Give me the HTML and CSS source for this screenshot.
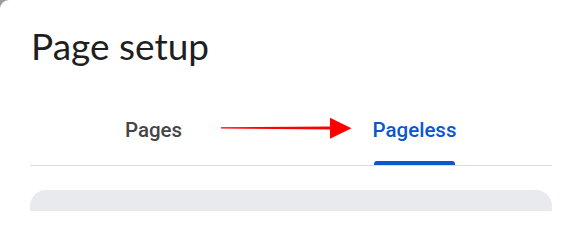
FILE: index.html
```html
<!DOCTYPE html>
<html lang="en">
<head>
<meta charset="utf-8">
<title>Page setup</title>
<link rel="stylesheet" href="styles.css">
</head>
<body>
<div class="dialog">
  <h1 class="title">Page setup</h1>
  <div class="tabbar">
    <div class="tabs">
      <div class="tab"><span class="tab-label">Pages</span></div>
      <div class="tab tab-active"><span class="tab-label">Pageless</span></div>
    </div>
  </div>
  <div class="panel"></div>
  <svg class="arrow" width="131" height="23" viewBox="0 0 131 23" aria-hidden="true">
    <polygon points="0,10.3 110,9.6 110,12.6 0,11.5" fill="#ff0000"/>
    <polygon points="109,0.8 130.5,11.2 109,21.8" fill="#ff0000"/>
  </svg>
</div>
</body>
</html>
```

FILE: styles.css
```css
html, body {
  margin: 0;
  padding: 0;
  height: 100%;
  background: #9e9e9e;
}
body {
  overflow: hidden;
}
.dialog {
  position: relative;
  background: #ffffff;
  min-height: 100%;
  border-top-left-radius: 9px;
  padding: 0 13px 0 30px;
  box-sizing: border-box;
  overflow: hidden;
  font-family: Lato, "Liberation Sans", sans-serif;
}
.title {
  margin: 0;
  padding: 24px 0 0 1px;
  font-size: 37px;
  line-height: 44px;
  font-weight: 400;
  color: #1f1f1f;
}
.tabbar {
  margin-top: 47px;
  border-bottom: 1px solid #dadce0;
}
.tabs {
  display: grid;
  grid-template-columns: 1fr 1fr;
  margin: 0 7px 0 -7px;
}
.tab {
  display: flex;
  justify-content: center;
  height: 50px;
}
.tab-label {
  position: relative;
  display: block;
  font-family: Roboto, "Liberation Sans", sans-serif;
  font-size: 20.5px;
  font-weight: 500;
  line-height: 30px;
  color: #444746;
}
.tab-active .tab-label {
  color: #0b57d0;
}
.tab-active .tab-label::after {
  content: "";
  position: absolute;
  left: 1px;
  right: 1px;
  top: 46px;
  height: 4px;
  background: #0b57d0;
  border-radius: 3px 3px 0 0;
}
.panel {
  margin-top: 24px;
  height: 21px;
  background: #e8eaed;
  border-radius: 16px 16px 0 0;
}
.arrow {
  position: absolute;
  left: 221px;
  top: 117px;
}
```
